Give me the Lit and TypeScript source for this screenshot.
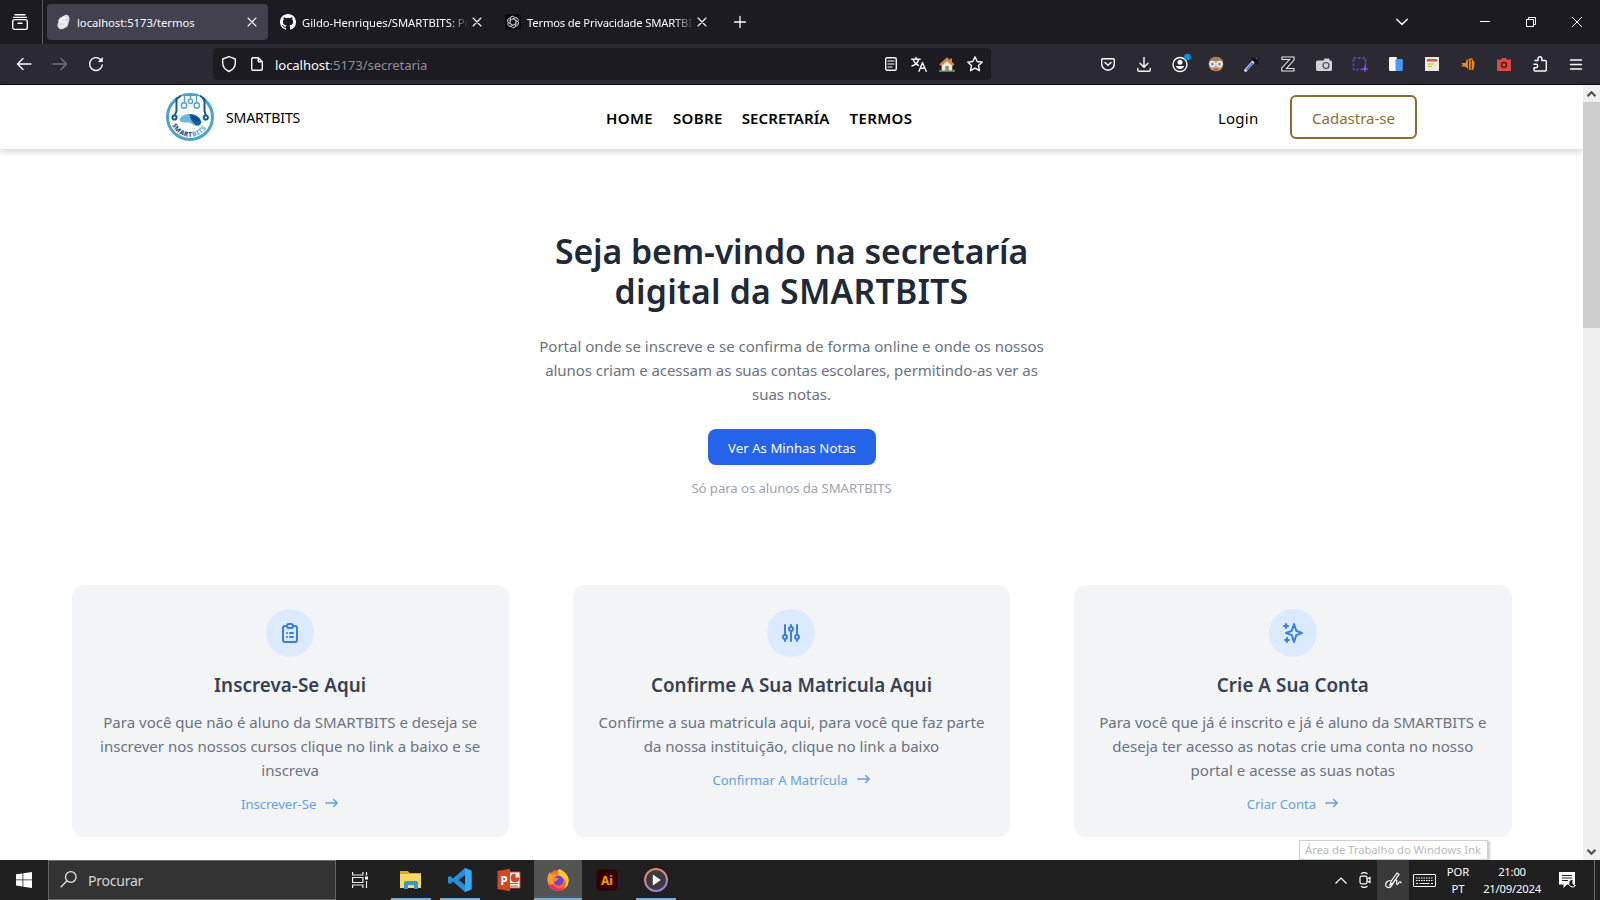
import { LitElement, html, css, svg } from "lit";
import { customElement } from "lit/decorators.js";
import { classMap } from "lit/directives/class-map.js";

const base = css`
  :host {
    font-family: "Noto Sans", "Open Sans", sans-serif;
    box-sizing: border-box;
  }
  *,
  *::before,
  *::after {
    box-sizing: border-box;
  }
  svg {
    display: block;
    flex: none;
    overflow: visible;
  }
  .line {
    fill: none;
    stroke: currentColor;
    stroke-width: 1.4;
    stroke-linecap: round;
    stroke-linejoin: round;
  }
`;

const closeIcon = html`<svg class="line" width="10" height="10" viewBox="0 0 10 10"><path d="M1 1l8 8M9 1l-8 8" stroke-width="1.1" /></svg>`;

@customElement("browser-chrome")
class BrowserChrome extends LitElement {
  static styles = [
    base,
    css`
      :host {
        display: block;
        color: #fbfbfe;
      }
      .tabbar {
        display: flex;
        height: 44px;
        background: #1c1b22;
        align-items: stretch;
      }
      .view {
        width: 43px;
        border-right: 1px solid #5a5962;
        display: grid;
        place-items: center;
        padding-right: 2px;
      }
      .tabs {
        display: flex;
        gap: 4px;
        padding: 4px 0 4px 4px;
      }
      .tab {
        width: 221px;
        display: flex;
        align-items: center;
        border-radius: 4px;
        padding: 0 11px 0 8px;
      }
      .tab.active {
        background: #42414d;
      }
      .fav {
        width: 16px;
        margin-right: 6px;
      }
      .title {
        flex: 1;
        font-size: 11.28px;
        line-height: 18px;
        padding-top: 1px;
        letter-spacing: -0.04px;
        white-space: nowrap;
        overflow: hidden;
        margin-right: 4px;
      }
      .title.narrow {
        letter-spacing: -0.2px;
      }
      .title.fade {
        margin-right: 3px;
        -webkit-mask-image: linear-gradient(90deg, #000 calc(100% - 20px), transparent);
        mask-image: linear-gradient(90deg, #000 calc(100% - 20px), transparent);
      }
      .plus {
        width: 44px;
        display: grid;
        place-items: center;
      }
      .grow {
        flex: 1;
      }
      .win {
        width: 46px;
        display: grid;
        place-items: center;
      }
      .list {
        width: 60px;
        margin-right: 30px;
      }
      .toolbar {
        height: 41px;
        display: flex;
        align-items: center;
        background: #2b2a33;
        border-bottom: 1px solid #0f0d16;
        padding-right: 6px;
      }
      .navs {
        display: flex;
        width: 213px;
        padding-left: 6px;
      }
      .slot {
        width: 36px;
        display: grid;
        place-items: center;
      }
      .dim {
        color: #74737c;
      }
      .url {
        width: 778px;
        height: 32px;
        background: #1c1b22;
        border-radius: 4px;
        display: flex;
        align-items: center;
        padding: 0 2px 0 2px;
        font-size: 13.16px;
        letter-spacing: -0.11px;
      }
      .mini {
        width: 28px;
        display: grid;
        place-items: center;
      }
      .addr {
        flex: 1;
        color: #8f8e96;
        padding: 2px 0 0 4px;
        line-height: 18px;
      }
      .addr b {
        font-weight: 400;
        color: #fbfbfe;
      }
    `,
  ];

  render() {
    return html`
      <div class="tabbar">
        <div class="view">
          <svg class="line" width="16" height="16" viewBox="0 0 16 16">
            <path d="M3 .8h10M1.5 3.4h13" />
            <rect x=".7" y="5.6" width="14.6" height="9.8" rx="2" />
            <path d="M6 9.3h4" />
          </svg>
        </div>
        <div class="tabs">
          <div class="tab active">
            <svg class="fav" width="16" height="16" viewBox="0 0 16 16">
              <path d="M9.7 1.2c2.2-1 4.4.2 4.6 2.6.5 1.4.3 3-.6 4.2.2 2.2-.8 4.3-2.7 5.4l-3 1.6c-2.2 1-4.8-.2-5.3-2.5-.5-1.4-.2-2.9.5-4-.3-2.2.7-4.2 2.5-5.3z" fill="#dcdce0" />
              <path d="M11.5 4.2c-1-1-2.2-.8-3.2-.2L5.9 5.5c-1.5 1-.8 3 1 2.800l2.200-.6c2-.2 2.600 2 1.200 3l-2.500 1.500c-1.200.7-2.500.5-3.300-.5" fill="none" stroke="#fff" stroke-width="1.3" />
            </svg>
            <span class="title">localhost:5173/termos</span>${closeIcon}
          </div>
          <div class="tab">
            <svg class="fav" width="16" height="16" viewBox="0 0 16 16">
              <path fill="#fbfbfe" d="M8 0C3.58 0 0 3.58 0 8c0 3.54 2.29 6.53 5.47 7.59.4.07.55-.17.55-.38 0-.19-.01-.82-.01-1.49-2.01.37-2.53-.49-2.69-.94-.09-.23-.48-.94-.82-1.13-.28-.15-.68-.52-.01-.53.63-.01 1.08.58 1.23.82.72 1.21 1.87.87 2.33.66.07-.52.28-.87.51-1.07-1.78-.2-3.64-.89-3.64-3.95 0-.87.31-1.59.82-2.15-.08-.2-.36-1.02.08-2.12 0 0 .67-.21 2.2.82a7.6 7.6 0 0 1 4 0c1.53-1.04 2.2-.82 2.2-.82.44 1.1.16 1.92.08 2.12.51.56.82 1.27.82 2.15 0 3.07-1.87 3.75-3.65 3.95.29.25.54.73.54 1.48 0 1.07-.01 1.93-.01 2.2 0 .21.15.46.55.38A8.01 8.01 0 0 0 16 8c0-4.42-3.58-8-8-8z" />
            </svg>
            <span class="title fade">Gildo-Henriques/SMARTBITS: Portal</span>${closeIcon}
          </div>
          <div class="tab">
            <svg class="fav" width="16" height="16" viewBox="0 0 16 16">
              <rect width="16" height="16" rx="3" fill="#0b0b0d" />
              <g fill="none" stroke="#d0d0d0" stroke-width=".8">
                ${[0, 60, 120, 180, 240, 300].map(
                  (a) => svg`<path transform="rotate(${a} 8 8)" d="M5.200 9.600V4.800a2.600 2.600 0 0 1 4.900-1.200M6.500 5.600L9.300 4a2.500 2.500 0 0 1 3.500 1" />`
                )}
              </g>
            </svg>
            <span class="title fade narrow">Termos de Privacidade SMARTBITS</span>${closeIcon}
          </div>
        </div>
        <div class="plus">
          <svg class="line" width="12" height="12" viewBox="0 0 12 12"><path d="M6 .5v11M.5 6h11" stroke-width="1.3" /></svg>
        </div>
        <div class="grow"></div>
        <div class="win list">
          <svg class="line" width="12" height="8" viewBox="0 0 12 8"><path d="M.7 1.2L6 6.500l5.300-5.300" /></svg>
        </div>
        <div class="win"><svg width="10" height="10"><path d="M0 4.500h10" stroke="#fff" /></svg></div>
        <div class="win">
          <svg width="10" height="10" fill="none" stroke="#fff"><path d="M.5 2.500h7v7h-7zM2.500 2V.5h7v7H8" /></svg>
        </div>
        <div class="win"><svg width="10" height="10" stroke="#fff"><path d="M0 0l10 10M10 0L0 10" /></svg></div>
      </div>

      <div class="toolbar">
        <div class="navs">
          <div class="slot">
            <svg class="line" width="16" height="16" viewBox="0 0 16 16"><path d="M15 8H1.500M7 2.500L1.500 8 7 13.500" /></svg>
          </div>
          <div class="slot dim">
            <svg class="line" width="16" height="16" viewBox="0 0 16 16"><path d="M1 8h13.500M9 2.500L14.500 8 9 13.500" /></svg>
          </div>
          <div class="slot">
            <svg class="line" width="16" height="16" viewBox="0 0 16 16">
              <path d="M14.300 9A6.400 6.400 0 1 1 12.500 3.500" /><path d="M14.800 1v5h-5z" fill="currentColor" stroke="none" />
            </svg>
          </div>
        </div>
        <div class="url">
          <div class="mini">
            <svg class="line" width="16" height="16" viewBox="0 0 16 16"><path d="M8 .7L14.300 3v4c0 4.200-2.600 6.800-6.300 8.500C4.300 13.800 1.700 11.200 1.700 7V3z" /></svg>
          </div>
          <div class="mini">
            <svg class="line" width="12" height="14" viewBox="0 0 12 14"><path d="M2 .7h5.300l4 4V12a1.300 1.300 0 0 1-1.300 1.300H2A1.300 1.300 0 0 1 .7 12V2A1.300 1.300 0 0 1 2 .7zM7.300.7v4h4" /></svg>
          </div>
          <div class="addr"><b>localhost</b>:5173/secretaria</div>
          <div class="mini">
            <svg class="line" width="12" height="14" viewBox="0 0 12 14"><rect x=".7" y=".7" width="10.600" height="12.600" rx="1.500" /><path d="M3 4h6M3 7h6M3 10h4" stroke-width="1.200" /></svg>
          </div>
          <div class="mini">
            <svg class="line" width="16" height="15" viewBox="0 0 16 15">
              <path d="M.7 2.300h8.500M5 .5v1.800M7.600 2.500C7 5.500 4.500 7.800 1 9M2.500 3.500c1 2.500 2.800 4 5 5" /><path d="M8 14.300l3.500-8.800 3.700 8.800M9.300 11.300h4.700" />
            </svg>
          </div>
          <div class="mini">
            <svg width="16" height="15" viewBox="0 0 16 15">
              <path d="M0 12.800h16V15H0z" fill="#4f8a3c" /><path d="M2.700 7L8 2.500 13.300 7v6.500H2.700z" fill="#efe9e0" />
              <path d="M8 .3L.3 7.300l2 2L8 4.300l5.700 5 2-2-2.700-2.400V1.500h-2v1.500z" fill="#c98a4b" /><path d="M6.300 9h3.500v5H6.300z" fill="#8d8a88" />
            </svg>
          </div>
          <div class="mini">
            <svg class="line" width="16" height="16" viewBox="0 0 16 16"><path d="M8 .8l2.200 4.700 5.100.6-3.800 3.500 1 5.100L8 12.200l-4.500 2.500 1-5.100L.7 6.100l5.100-.6z" /></svg>
          </div>
        </div>
        <div class="grow"></div>
        <div class="slot">
          <svg class="line" width="14" height="13" viewBox="0 0 14 13"><path d="M1.800.7h10.400c.7 0 1.100.5 1.100 1.100v4.100a6.300 6.300 0 0 1-12.600 0V1.800C.7 1.200 1.100.7 1.800.7zM4 4.500l3 2.800 3-2.800" /></svg>
        </div>
        <div class="slot">
          <svg class="line" width="14" height="15" viewBox="0 0 14 15"><path d="M7 .5v9.500M3 6.300l4 3.900 4-3.900M.7 11.500v1.200c0 .9.600 1.500 1.500 1.500h9.600c.9 0 1.500-.6 1.500-1.500v-1.200" /></svg>
        </div>
        <div class="slot">
          <svg width="16" height="16" viewBox="0 0 16 16">
            <circle cx="8" cy="8.500" r="7" class="line" /><circle cx="8" cy="6.300" r="2.500" fill="#fff" /><path d="M3.800 10h8.400a4.500 4.500 0 0 1-8.400 0z" fill="#fff" /><circle cx="15.500" cy="1" r="3.300" fill="#0a93e2" />
          </svg>
        </div>
        <div class="slot">
          <svg width="16" height="16" viewBox="0 0 16 16">
            <circle cx="8" cy="8" r="7.300" fill="#d09c78" /><path d="M1.500 5a7.300 7.300 0 0 1 13 0z" fill="#a77c58" />
            <g fill="#7fa9c0" stroke="#eef4f6" stroke-width="1.300"><circle cx="4.500" cy="8" r="2.500" /><circle cx="11.500" cy="8" r="2.500" /></g><path d="M5.500 13.500h5" stroke="#b5502f" stroke-width="1.800" />
          </svg>
        </div>
        <div class="slot">
          <svg width="16" height="16" viewBox="0 0 16 16">
            <path d="M1.500 14.500l8-9" stroke="#c7cff7" stroke-width="3" stroke-linecap="round" /><path d="M2.500 14l6-7" stroke="#5368c9" stroke-width="1.500" /><path d="M9 3l4.500 4M11 5l3-3" stroke="#111016" stroke-width="3" stroke-linecap="round" /><path d="M12 3l2-1.500" stroke="#77757f" />
          </svg>
        </div>
        <div class="slot">
          <svg width="14" height="16" viewBox="0 0 14 16"><path d="M1 1h12v3L5.500 12.500H13V15H.8v-3L8.500 3.500H1z" fill="#222127" stroke="#e8e8ea" stroke-width="1.100" /></svg>
        </div>
        <div class="slot">
          <svg width="16" height="13" viewBox="0 0 16 13"><path d="M1.500 2.500h6L8.500.5h4.500l1 2h.5A1.500 1.500 0 0 1 16 4v7.500a1.500 1.500 0 0 1-1.500 1.500h-13A1.500 1.500 0 0 1 0 11.500V4a1.500 1.500 0 0 1 1.500-1.500z" fill="#d2d2d4" /><circle cx="10" cy="7.500" r="3" fill="none" stroke="#46454e" stroke-width="1.200" /></svg>
        </div>
        <div class="slot">
          <svg width="16" height="15" viewBox="0 0 16 15"><rect x="1.500" y="1" width="12" height="11.500" fill="none" stroke="#6945c9" stroke-width="1.600" stroke-dasharray="2.800 1.500" /><path d="M13 9v5.500M10.500 11.800h5" stroke="#7a55dd" stroke-width="1.800" /></svg>
        </div>
        <div class="slot">
          <svg width="14" height="14" viewBox="0 0 14 14"><rect width="8" height="14" rx="1.300" fill="#f4f6fa" /><rect x="6.500" y="2" width="7.300" height="12" rx="1.300" fill="#469af4" /></svg>
        </div>
        <div class="slot">
          <svg width="14" height="14" viewBox="0 0 14 14"><rect width="14" height="14" fill="#ece9e2" /><path d="M2 2h10v2.500H2z" fill="#e0524c" /><path d="M3 7h6M3 9.500h4" stroke="#c3b840" stroke-width="1.200" /></svg>
        </div>
        <div class="slot">
          <svg width="14" height="13" viewBox="0 0 15 14"><path d="M6 2l6-2 1 3 1.500 1-.5 6-1 3-5-.5L5 9.500 0 9l2-2L0 5.500h5z" fill="#ec8c0d" /><path d="M8 2v10M11 2v10" stroke="#3c1d05" stroke-width="1.100" /></svg>
        </div>
        <div class="slot">
          <svg width="14" height="13" viewBox="0 0 14 13"><path d="M1 1.500h3.500l.7-1.500h3.600l.7 1.500H13c.6 0 1 .4 1 1V12c0 .6-.4 1-1 1H1c-.6 0-1-.4-1-1V2.500c0-.6.4-1 1-1z" fill="#dc4b41" /><circle cx="7" cy="7" r="2.500" fill="none" stroke="#54161a" stroke-width="1.400" /></svg>
        </div>
        <div class="slot">
          <svg class="line" width="14" height="16" viewBox="0 0 14 16"><path d="M2 4.500h3V2.700a1.900 1.900 0 0 1 3.800 0v1.800h3.500c.6 0 1 .4 1 1V14c0 .6-.4 1-1 1H2c-.6 0-1-.4-1-1v-2.300h2a1.700 1.700 0 0 0 0-3.500H1" /></svg>
        </div>
        <div class="slot">
          <svg class="line" width="12" height="11" viewBox="0 0 12 11"><path d="M.5 1h11M.5 5.500h11M.5 10h11" /></svg>
        </div>
      </div>
    `;
  }
}

@customElement("smart-logo")
class SmartLogo extends LitElement {
  static styles = [
    base,
    css`
      :host {
        display: block;
      }
      .arc {
        font: 800 6.6px "Noto Sans", sans-serif;
        letter-spacing: 0.5px;
      }
    `,
  ];
  render() {
    return html`<svg width="48" height="48" viewBox="0 0 48 48">
      <circle cx="24" cy="24" r="22.500" fill="#fff" stroke="#4ba3cc" stroke-width="3" />
      <path d="M12 3h24v4H12z" fill="#fff" />
      <g fill="none" stroke="#4ba3cc" stroke-width="1.400">
        <path d="M18.500 2v8M24.500 0v6M30.500 2v8M17 1.500h15" />
        <circle cx="18" cy="12.500" r="2.700" /><circle cx="24.500" cy="8.300" r="2.200" /><circle cx="30.800" cy="12.500" r="2.700" />
      </g>
      <g fill="none" stroke="#175a94" stroke-width="2">
        <path d="M15 2.800L10.500 6v12L8.700 22.500M34 2.800L38.500 6v12l1.300 4.500" />
        <circle cx="8.500" cy="24.500" r="2.100" /><circle cx="39.800" cy="24.500" r="2.100" />
      </g>
      <path d="M13.500 27c1-4.500 6-6.500 11-6 6 .3 10.500 4 10.500 8 0 3-2.500 4-5.500 3.500-3-.8-4-2.500-7-3-3.500-.5-8 1-9-2.500z" fill="#6db6dc" />
      <path d="M23.500 21c6 0 11.500 4 11.500 8 0 3-2.500 4-5.500 3.500-1-3-5-3-6-11.500z" fill="#155fa5" />
      <path d="M24.500 22c4 1 8 3 10 6.500-3-.5-7-1.500-9-4z" fill="#0f4a85" />
      <path id="arc" d="M5.300 30a19.600 19.600 0 0 0 37.400 0" fill="none" />
      <text class="arc"><textPath href="#arc" startOffset="2"><tspan fill="#164f86">SMART</tspan><tspan fill="#58aad3">BITS</tspan></textPath></text>
    </svg>`;
  }
}

interface Card {
  icon: unknown;
  title: string;
  lines: string[];
  link: string;
}

const cards: Card[] = [
  {
    icon: svg`<path d="M9 5H7a2 2 0 0 0-2 2v12a2 2 0 0 0 2 2h10a2 2 0 0 0 2-2V7a2 2 0 0 0-2-2h-2M9 5a2 2 0 0 0 2 2h2a2 2 0 0 0 2-2M9 5a2 2 0 0 1 2-2h2a2 2 0 0 1 2 2m-3 7h3m-3 4h3m-6-4h.01M9 16h.01"/>`,
    title: "Inscreva-Se Aqui",
    lines: ["Para você que não é aluno da SMARTBITS e deseja se", "inscrever nos nossos cursos clique no link a baixo e se", "inscreva"],
    link: "Inscrever-Se",
  },
  {
    icon: svg`<path d="M12 6V4m0 2a2 2 0 1 0 0 4m0-4a2 2 0 1 1 0 4m-6 8a2 2 0 1 0 0-4m0 4a2 2 0 1 1 0-4m0 4v2m0-6V4m6 6v10m6-2a2 2 0 1 0 0-4m0 4a2 2 0 1 1 0-4m0 4v2m0-6V4"/>`,
    title: "Confirme A Sua Matricula Aqui",
    lines: ["Confirme a sua matricula aqui, para você que faz parte", "da nossa instituição, clique no link a baixo"],
    link: "Confirmar A Matrícula",
  },
  {
    icon: svg`<path d="M5 3v4M3 5h4M6 17v4m-2-2h4m5-16l2.286 6.857L21 12l-5.714 2.143L13 21l-2.286-6.857L5 12l5.714-2.143L13 3z"/>`,
    title: "Crie A Sua Conta",
    lines: ["Para você que já é inscrito e já é aluno da SMARTBITS e", "deseja ter acesso as notas crie uma conta no nosso", "portal e acesse as suas notas"],
    link: "Criar Conta",
  },
];

@customElement("web-page")
class WebPage extends LitElement {
  static styles = [
    base,
    css`
      :host {
        display: flex;
        height: 775px;
        background: #fff;
      }
      .page {
        width: 1583px;
        display: flex;
        flex-direction: column;
      }
      header {
        height: 64px;
        flex: none;
        display: flex;
        align-items: center;
        padding: 0 166px;
        background: #fff;
        box-shadow: 0 3px 6px rgba(0, 0, 0, 0.16);
        color: #000;
        font-size: 15.04px;
        line-height: 24px;
      }
      .brand {
        font-size: 14.1px;
        letter-spacing: -0.17px;
        padding: 2px 0 0 12px;
        width: 392px;
      }
      nav {
        display: flex;
        gap: 20px;
        font-weight: 600;
        padding-top: 1px;
        width: 612px;
        letter-spacing: 0.35px;
      }
      nav .tight {
        letter-spacing: 0.05px;
        margin-left: -1px;
      }
      .login {
        letter-spacing: 0.2px;
        padding-top: 1px;
        width: 72px;
      }
      .join {
        width: 127px;
        height: 44px;
        border: 2px solid #8b6c30;
        border-radius: 6px;
        color: #8b6c30;
        text-align: center;
        padding-top: 9px;
      }
      .hero {
        display: flex;
        flex-direction: column;
        align-items: center;
        text-align: center;
        padding-top: 82px;
        white-space: nowrap;
      }
      h1,
      h2,
      p {
        margin: 0;
      }
      h1 {
        color: #1f2937;
        font-size: 33.84px;
        font-weight: 600;
        line-height: 40px;
      }
      h1 .one {
        letter-spacing: -0.11px;
      }
      h1 .two {
        letter-spacing: 0.21px;
      }
      .lead {
        margin-top: 23px;
        font-size: 15.04px;
        line-height: 24px;
        color: #6b7280;
      }
      .lead .snug {
        letter-spacing: -0.065px;
      }
      .cta {
        margin-top: 23px;
        width: 168px;
        height: 36px;
        border-radius: 8px;
        background: #2563eb;
        color: #fff;
        font-size: 13.16px;
        line-height: 36px;
        padding: 1px 0 0 1px;
        letter-spacing: 0.04px;
      }
      .note {
        margin-top: 13px;
        font-size: 13.16px;
        line-height: 20px;
        color: #9ca3af;
        letter-spacing: -0.06px;
      }
      .cards {
        display: grid;
        grid-template-columns: repeat(3, 1fr);
        gap: 64px;
        padding: 0 71.5px;
        margin-top: 87px;
        height: 252px;
        flex: none;
      }
      .card {
        background: #f2f4f6;
        border-radius: 12px;
        padding-top: 24px;
        display: flex;
        flex-direction: column;
        align-items: center;
        text-align: center;
        white-space: nowrap;
      }
      .dot {
        width: 48px;
        height: 48px;
        border-radius: 50%;
        background: #dbeafe;
        color: #3b7fdb;
        display: grid;
        place-items: center;
      }
      .dot .line {
        stroke-width: 2;
      }
      h2 {
        margin-top: 14px;
        font-size: 18.8px;
        font-weight: 600;
        line-height: 28px;
        color: #374151;
        letter-spacing: 0.06px;
      }
      .body {
        margin-top: 11px;
        font-size: 15.04px;
        line-height: 24px;
        color: #6b7280;
      }
      .link {
        margin-top: 12px;
        display: flex;
        align-items: center;
        gap: 9px;
        font-size: 13.16px;
        line-height: 20px;
        color: #659fe5;
        letter-spacing: -0.05px;
        padding-right: 1px;
      }
      .link svg {
        margin-top: -2px;
      }
      .scroll {
        width: 17px;
        background: #f0f0f0;
        color: #505050;
        display: flex;
        flex-direction: column;
        align-items: center;
      }
      .thumb {
        width: 17px;
        height: 226px;
        background: #cdcdcd;
      }
      .arrow {
        height: 17px;
        display: grid;
        place-items: center;
      }
      .arrow path {
        fill: none;
        stroke: currentColor;
        stroke-width: 2.2;
      }
      .gap {
        flex: 1;
      }
    `,
  ];

  render() {
    return html`
      <div class="page">
        <header>
          <smart-logo></smart-logo>
          <div class="brand">SMARTBITS</div>
          <nav>
            <span>HOME</span><span>SOBRE</span><span class="tight">SECRETARÍA</span><span>TERMOS</span>
          </nav>
          <div class="login">Login</div>
          <div class="join">Cadastra-se</div>
        </header>
        <section class="hero">
          <h1><span class="one">Seja bem-vindo na secretaría</span><br /><span class="two">digital da SMARTBITS</span></h1>
          <p class="lead">
            Portal onde se inscreve e se confirma de forma online e onde os nossos<br />
            <span class="snug">alunos criam e acessam as suas contas escolares, permitindo-as ver as<br />suas notas.</span>
          </p>
          <div class="cta">Ver As Minhas Notas</div>
          <div class="note">Só para os alunos da SMARTBITS</div>
        </section>
        <section class="cards">
          ${cards.map(
            (c) => html`<article class="card">
              <div class="dot"><svg class="line" width="24" height="24" viewBox="0 0 24 24">${c.icon}</svg></div>
              <h2>${c.title}</h2>
              <p class="body">${c.lines.map((l, i) => html`${i ? html`<br />` : ""}${l}`)}</p>
              <div class="link">
                ${c.link}
                <svg class="line" width="13" height="10" viewBox="0 0 13 10"><path d="M.8 5h11.400M8.700 1.500L12.200 5 8.700 8.500" /></svg>
              </div>
            </article>`
          )}
        </section>
      </div>
      <div class="scroll">
        <div class="arrow"><svg width="9" height="6"><path d="M.5 5.300l4-4 4 4" /></svg></div>
        <div class="thumb"></div>
        <div class="gap"></div>
        <div class="arrow"><svg width="9" height="6"><path d="M.5 .8l4 4 4-4" /></svg></div>
      </div>
    `;
  }
}

const apps = [
  {
    open: true,
    icon: svg`<path d="M1 3h8l1.500 2H22v15H1z" fill="#e5a823"/><path d="M1 6h21v14H1z" fill="#fbd968"/><path d="M5 21v-6.500a1.500 1.500 0 0 1 1.500-1.500h11a1.500 1.500 0 0 1 1.500 1.500V21h-4v-4H9v4z" fill="#3f96cf"/>`,
  },
  {
    open: true,
    icon: svg`<path d="M17 0l6.500 2.800v18.400L17 24 5 13.500 2 16l-2-1.200V9.200L2 8l3 2.500zM17 7l-6.500 5L17 17z" fill="#2390dc" fill-rule="evenodd"/><path d="M17 0l6.500 2.800v18.400L17 24z" fill="#37a9f2"/>`,
  },
  {
    open: false,
    icon: svg`<path d="M12 4h11v16H12z" fill="#f6f3f1" stroke="#d24726"/><path d="M18 6v4h4a4 4 0 1 1-4-4zM13 15.500h8M13 18h8" fill="#d24726" stroke="#d24726"/><path d="M.5 3L13 .8v22.400L.5 21z" fill="#d24726"/><text x="3.300" y="16.500" font-size="12" font-weight="700" fill="#fff">P</text>`,
  },
  {
    open: true,
    current: true,
    icon: svg`<circle cx="12" cy="12.500" r="10.500" fill="#ff6a2b"/><path d="M13 1c4 1 10 6 9.700 12a10.700 10.700 0 0 1-10.700 10c3 0 8-3 8-8 0-5-5-5-7-7-1.500-1.700-1.500-5 0-7z" fill="#ffc933"/><path d="M1.500 12C1 8 3 5 4 4c0 1.500.7 2 1.500 2.500C8 5.500 10 6 12 8l-4 3 .5 5C5 19 2 16 1.500 12z" fill="#ff9a2e"/><path d="M3 17a10.500 10.500 0 0 0 17 2c-5 3-11 2-13-3z" fill="#f5276b"/><circle cx="12.500" cy="12.800" r="5" fill="#7443d6"/><path d="M7 11c2-2 4-1.500 5.500-.5-1 2-3 2-3 3.500-1.500 0-2.500-1.500-2.500-3z" fill="#ff8a2d"/>`,
  },
  {
    open: false,
    icon: svg`<rect x="1.500" y="1.500" width="21" height="21" rx="4" fill="#330000"/><text x="12" y="16.500" font-size="12" font-weight="700" text-anchor="middle" fill="#ff9a00">Ai</text>`,
  },
  {
    open: true,
    icon: svg`<defs><linearGradient id="ring" x1="0" y1="0" x2=".4" y2="1"><stop offset="0" stop-color="#ef8b3c"/><stop offset=".5" stop-color="#c98a9a"/><stop offset="1" stop-color="#9c7fd6"/></linearGradient></defs><circle cx="12" cy="12" r="11" fill="#3b3a40" stroke="url(#ring)" stroke-width="2"/><path d="M8.800 6.500v11l8-5.500z" fill="#fff"/>`,
  },
];

@customElement("task-bar")
class TaskBar extends LitElement {
  static styles = [
    base,
    css`
      :host {
        display: flex;
        height: 40px;
        background: #202020;
        color: #fff;
        font-size: 11.28px;
      }
      .cell {
        display: grid;
        place-items: center;
        flex: none;
      }
      .start {
        width: 48px;
      }
      .search {
        width: 288px;
        background: #333;
        border: 1px solid #686868;
        display: flex;
        align-items: center;
        padding: 0 0 0 11px;
        gap: 11px;
        font-size: 14.1px;
        letter-spacing: -0.28px;
        color: #d4d4d4;
      }
      .search svg {
        margin-top: -1px;
      }
      .task {
        width: 48px;
        margin-right: 3px;
      }
      .app {
        width: 48px;
        margin-right: 1px;
        height: 40px;
        padding-bottom: 1px;
      }
      .app.open {
        background: linear-gradient(#77addd, #77addd) center bottom / 40px 2px no-repeat;
      }
      .app.current {
        background: linear-gradient(#77addd, #77addd) center bottom / 48px 2px no-repeat #545353;
      }
      .grow {
        flex: 1;
      }
      .w24 {
        width: 24px;
      }
      .ink {
        width: 32px;
        background: #393939;
      }
      .lang,
      .clock {
        text-align: center;
        line-height: 17px;
        padding-top: 3px;
        flex: none;
      }
      .lang {
        width: 38px;
      }
      .clock {
        width: 70px;
        letter-spacing: -0.22px;
      }
      .notif {
        width: 40px;
        margin-right: 7px;
      }
      .kbd {
        width: 30px;
      }
      .desk {
        width: 6px;
        border-left: 1px solid #6a6a6a;
      }
    `,
  ];

  render() {
    return html`
      <div class="cell start">
        <svg width="16" height="16" viewBox="0 0 16 16" fill="#fff"><path d="M0 2.300l6.500-.9v6.100H0zM7.300 1.300L16 0v7.500H7.300zM0 8.300h6.500v6.200L0 13.600zM7.300 8.300H16V16l-8.700-1.300z" /></svg>
      </div>
      <div class="search">
        <svg width="17" height="17" viewBox="0 0 17 17" fill="none" stroke="#e4e4e4" stroke-width="1.300"><circle cx="10.800" cy="6" r="5.300" /><path d="M7 9.800L.7 16.200" /></svg>
        <span>Procurar</span>
      </div>
      <div class="cell task">
        <svg width="16" height="16" viewBox="0 0 16 16" fill="none" stroke="#eee" stroke-width="1.200"><path d="M.6 0v3h10.300V0M.6 16v-3h10.300v3M.6 5.500h10.300v5H.6zM14.500 0v3.500M14.500 9v7" /><path d="M13 4.500h3v3h-3z" fill="#fff" stroke="none" /></svg>
      </div>
      ${apps.map(
        (a) => html`<div class=${classMap({ cell: true, app: true, open: a.open, current: !!a.current })}>
          <svg width="24" height="24" viewBox="0 0 24 24">${a.icon}</svg>
        </div>`
      )}
      <div class="grow"></div>
      <div class="cell w24">
        <svg width="12" height="7" viewBox="0 0 12 7" fill="none" stroke="#fff" stroke-width="1.200"><path d="M.5 6.500L6 1l5.500 5.500" /></svg>
      </div>
      <div class="cell w24">
        <svg width="12" height="16" viewBox="0 0 12 16" fill="none" stroke="#fff" stroke-width="1.200"><rect x="1" y="4.200" width="7" height="7.600" rx="1.500" /><path d="M8 7l3-1.500v5L8 9M2 1.800C4 .3 6.500.3 8.500 1.800M2 14.200c2 1.500 4.500 1.500 6.500 0" /></svg>
      </div>
      <div class="cell ink">
        <svg width="17" height="17" viewBox="0 0 17 17" fill="none" stroke="#fff" stroke-width="1.200"><path d="M5 13l1-3.500 6-8.500 2 1.300-6 8.700zM5.500 8.500C2 8.500.5 11 .7 13c.3 2.500 3.300 3.500 5.300 1.500C8 12 9.500 7.500 11.500 8c1.500.5-1 4 .5 4.500 1 .3 1.500-2 2.500-2.500 1-.3 1.500.5 2 1" /></svg>
      </div>
      <div class="cell kbd">
        <svg width="23" height="13" viewBox="0 0 23 13" fill="none" stroke="#fff"><rect x=".5" y=".5" width="22" height="12" rx=".5" /><path d="M3 4h17M3 6.500h17" stroke-dasharray="1.500 1" /><path d="M3 9.500h2M6.500 9.500h10M18 9.500h2" /></svg>
      </div>
      <div class="lang">POR<br />PT</div>
      <div class="clock">21:00<br />21/09/2024</div>
      <div class="cell notif">
        <svg width="17" height="17" viewBox="0 0 17 17"><path d="M0 0h16v12.500H8L4.500 16v-3.500H0z" fill="#fff" /><path d="M3 3.500h10M3 6h10M3 8.500h6" stroke="#202020" stroke-width="1.200" /><path d="M14.500 7.500a3.800 3.800 0 1 0 2 6c-2 .5-3.500-3-2-6z" fill="#202020" stroke="#fff" /></svg>
      </div>
      <div class="desk"></div>
    `;
  }
}

@customElement("app-root")
class AppRoot extends LitElement {
  static styles = [
    base,
    css`
      :host {
        display: block;
        position: relative;
        width: 1600px;
        height: 900px;
        overflow: hidden;
      }
      .tip {
        position: absolute;
        left: 1299px;
        top: 840px;
        width: 189px;
        height: 20px;
        border: 1px solid #cfcfcf;
        background: #fff;
        box-shadow: 2px 1px 2px rgba(0, 0, 0, 0.2);
        color: #b9b9b9;
        font-size: 11.28px;
        line-height: 18px;
        padding-left: 5px;
        letter-spacing: -0.04px;
        white-space: nowrap;
        clip-path: inset(0 -5px 0 0);
      }
    `,
  ];
  render() {
    return html`
      <browser-chrome></browser-chrome>
      <web-page></web-page>
      <task-bar></task-bar>
      <div class="tip">Área de Trabalho do Windows Ink</div>
    `;
  }
}
